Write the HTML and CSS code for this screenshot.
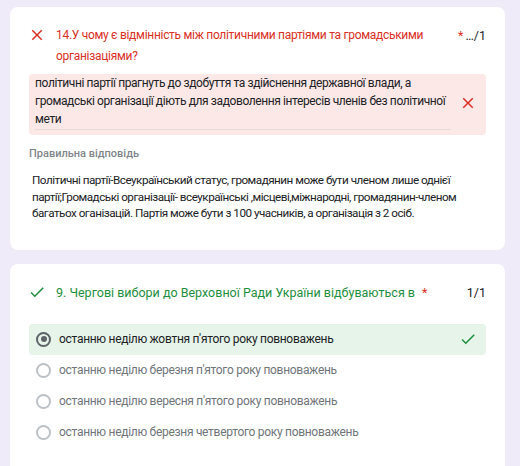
FILE: index.html
```html
<!DOCTYPE html>
<html lang="uk">
<head>
<meta charset="utf-8">
<link rel="stylesheet" href="styles.css">
</head>
<body>
<div class="page">
  <section class="card card-first">
    <div class="q-head">
      <svg class="q-icon wrong" viewBox="0 0 24 24"><path d="M19 6.41L17.59 5 12 10.59 6.41 5 5 6.41 10.59 12 5 17.59 6.41 19 12 13.41 17.59 19 19 17.59 13.41 12z"/></svg>
      <div class="q-title q-title-tight wrong-text">14.У чому є відмінність між політичними партіями та громадськими організаціями?</div>
      <div class="q-points"><span class="star">*</span>…/1</div>
    </div>
    <div class="answer-box">
      <div class="answer-text">політичні партії прагнуть до здобуття та здійснення державної влади, а громадські організації діють для задоволення інтересів членів без політичної мети</div>
      <svg class="answer-icon wrong" viewBox="0 0 24 24"><path d="M19 6.41L17.59 5 12 10.59 6.41 5 5 6.41 10.59 12 5 17.59 6.41 19 12 13.41 17.59 19 19 17.59 13.41 12z"/></svg>
    </div>
    <div class="correct-label">Правильна відповідь</div>
    <div class="correct-text">Політичні партії-Всеукраїнський статус, громадянин може бути членом лише однієї партії;Громадські організації- всеукраїнські ,місцеві,міжнародні, громадянин-членом багатьох оганізацій. Партія може бути з 100 учасників, а організація з 2 осіб.</div>
  </section>

  <section class="card card-last">
    <div class="q-head">
      <svg class="q-icon right" viewBox="0 0 24 24"><path d="M9 16.17L4.83 12l-1.42 1.41L9 19 21 7l-1.41-1.41z"/></svg>
      <div class="q-title right-text">9. Чергові вибори до Верховної Ради України відбуваються в <span class="star">*</span></div>
      <div class="q-points">1/1</div>
    </div>
    <ul class="options">
      <li class="option selected">
        <span class="radio checked"></span>
        <span class="opt-text">останню неділю жовтня п'ятого року повноважень</span>
        <svg class="opt-icon right" viewBox="0 0 24 24"><path d="M9 16.17L4.83 12l-1.42 1.41L9 19 21 7l-1.41-1.41z"/></svg>
      </li>
      <li class="option">
        <span class="radio"></span>
        <span class="opt-text">останню неділю березня п'ятого року повноважень</span>
      </li>
      <li class="option">
        <span class="radio"></span>
        <span class="opt-text">останню неділю вересня п'ятого року повноважень</span>
      </li>
      <li class="option">
        <span class="radio"></span>
        <span class="opt-text">останню неділю березня четвертого року повноважень</span>
      </li>
    </ul>
  </section>
</div>
</body>
</html>
```

FILE: styles.css
```css
html, body {
  margin: 0;
  padding: 0;
  background: #f0ebf8;
  font-family: Roboto, "Noto Sans", Arial, sans-serif;
  color: #202124;
}

.page {
  padding: 7px 15px 0 10px;
  display: flex;
  flex-direction: column;
  gap: 14px;
}

.card {
  background: #fff;
  border-radius: 8px;
  padding: 18px 19px 28px 19px;
}

.card-last {
  padding-bottom: 40px;
}

.q-head {
  display: flex;
  align-items: flex-start;
}

.q-icon {
  width: 18px;
  height: 18px;
  flex: none;
  margin: 1px 9px 0 -1px;
}

.wrong { fill: #d93025; }
.right { fill: #1e8e3e; }

.q-title {
  flex: 1;
  font-size: 12.5px;
  line-height: 21px;
  padding-left: 1px;
}

.q-title-tight {
  font-size: 12px;
  letter-spacing: -0.3px;
}

.wrong-text { color: #d93025; }
.right-text { color: #1e8e3e; }

.q-points {
  flex: none;
  font-size: 12.5px;
  line-height: 21px;
  color: #202124;
}

.star {
  color: #d93025;
  margin-right: 2px;
}

.q-title .star {
  margin-left: 4px;
}

.answer-box {
  margin-top: 7px;
  background: #fce8e6;
  border-radius: 4px;
  padding: 0 9px 5px 6px;
  display: flex;
  align-items: center;
  gap: 8px;
}

.answer-text {
  flex: 1;
  font-size: 12px;
  letter-spacing: -0.4px;
  line-height: 18px;
  padding-bottom: 1px;
  border-bottom: 1px solid rgba(0, 0, 0, 0.07);
}

.answer-icon {
  width: 18px;
  height: 18px;
  flex: none;
  margin-top: 2px;
}

.correct-label {
  margin-top: 11px;
  font-size: 11px;
  line-height: 16px;
  font-weight: 500;
  color: #80868b;
}

.correct-text {
  margin-top: 10px;
  padding-left: 3px;
  font-size: 11.7px;
  letter-spacing: -0.5px;
  line-height: 16.5px;
}

.options {
  list-style: none;
  margin: 21px 0 0 0;
  padding: 0;
}

.option {
  display: flex;
  align-items: center;
  height: 31px;
  padding: 0 9px 0 7px;
  border-radius: 4px;
  font-size: 12px;
  letter-spacing: -0.3px;
  color: #70757a;
}

.option.selected {
  background: #e6f4ea;
  color: #202124;
}

.radio {
  box-sizing: border-box;
  width: 15px;
  height: 15px;
  border: 2px solid #bdc1c6;
  border-radius: 50%;
  flex: none;
  margin-right: 8px;
  position: relative;
}

.radio.checked {
  border-color: #5f6368;
}

.radio.checked::after {
  content: "";
  position: absolute;
  left: 2.5px;
  top: 2.5px;
  width: 6px;
  height: 6px;
  border-radius: 50%;
  background: #5f6368;
}

.opt-text {
  flex: 1;
}

.opt-icon {
  width: 18px;
  height: 18px;
  flex: none;
}
```
